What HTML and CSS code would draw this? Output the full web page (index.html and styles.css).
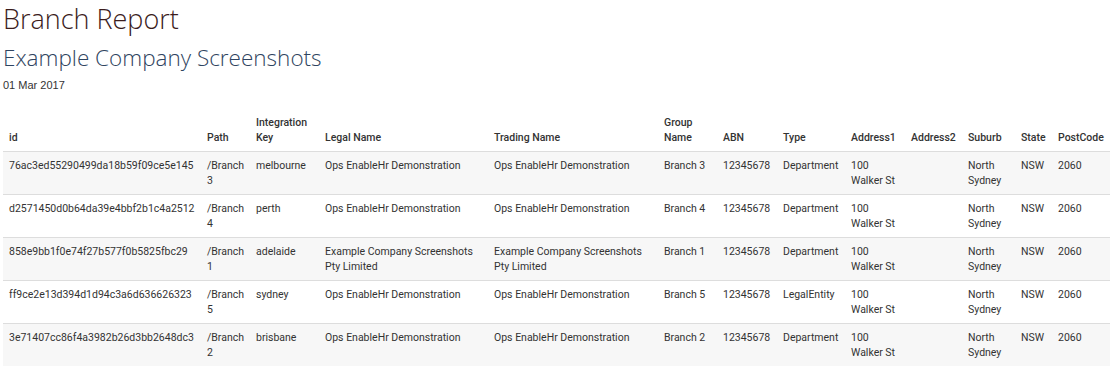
FILE: index.html
```html
<!DOCTYPE html>
<html>
<head>
<meta charset="utf-8">
<link rel="stylesheet" href="styles.css">
</head>
<body>
<div class="page">
  <h1 class="title">Branch Report</h1>
  <h2 class="subtitle">Example Company Screenshots</h2>
  <div class="date">01 Mar 2017</div>
  <table class="report">
    <colgroup>
      <col class="c-id"><col class="c-path"><col class="c-key"><col class="c-legal"><col class="c-trading"><col class="c-group"><col class="c-abn"><col class="c-type"><col class="c-a1"><col class="c-a2"><col class="c-suburb"><col class="c-state"><col class="c-post">
    </colgroup>
    <thead>
      <tr>
        <th>id</th><th>Path</th><th>Integration Key</th><th>Legal Name</th><th>Trading Name</th><th>Group Name</th><th>ABN</th><th>Type</th><th>Address1</th><th>Address2</th><th>Suburb</th><th>State</th><th>PostCode</th>
      </tr>
    </thead>
    <tbody>
      <tr>
        <td>76ac3ed55290499da18b59f09ce5e145</td><td>/Branch 3</td><td>melbourne</td><td>Ops EnableHr Demonstration</td><td>Ops EnableHr Demonstration</td><td>Branch 3</td><td>12345678</td><td>Department</td><td>100 Walker St</td><td></td><td>North Sydney</td><td>NSW</td><td>2060</td>
      </tr>
      <tr>
        <td>d2571450d0b64da39e4bbf2b1c4a2512</td><td>/Branch 4</td><td>perth</td><td>Ops EnableHr Demonstration</td><td>Ops EnableHr Demonstration</td><td>Branch 4</td><td>12345678</td><td>Department</td><td>100 Walker St</td><td></td><td>North Sydney</td><td>NSW</td><td>2060</td>
      </tr>
      <tr>
        <td>858e9bb1f0e74f27b577f0b5825fbc29</td><td>/Branch 1</td><td>adelaide</td><td>Example Company Screenshots Pty Limited</td><td>Example Company Screenshots Pty Limited</td><td>Branch 1</td><td>12345678</td><td>Department</td><td>100 Walker St</td><td></td><td>North Sydney</td><td>NSW</td><td>2060</td>
      </tr>
      <tr>
        <td>ff9ce2e13d394d1d94c3a6d636626323</td><td>/Branch 5</td><td>sydney</td><td>Ops EnableHr Demonstration</td><td>Ops EnableHr Demonstration</td><td>Branch 5</td><td>12345678</td><td>LegalEntity</td><td>100 Walker St</td><td></td><td>North Sydney</td><td>NSW</td><td>2060</td>
      </tr>
      <tr>
        <td>3e71407cc86f4a3982b26d3bb2648dc3</td><td>/Branch 2</td><td>brisbane</td><td>Ops EnableHr Demonstration</td><td>Ops EnableHr Demonstration</td><td>Branch 2</td><td>12345678</td><td>Department</td><td>100 Walker St</td><td></td><td>North Sydney</td><td>NSW</td><td>2060</td>
      </tr>
    </tbody>
  </table>
</div>
</body>
</html>
```
FILE: styles.css
```css
html, body {
  margin: 0;
  padding: 0;
  background: #fff;
}
.page {
  padding: 0 4px 0 3px;
  font-family: Roboto, "Liberation Sans", sans-serif;
  color: #333;
}
.title {
  margin: 0;
  padding-top: 2px;
  font-family: "Open Sans", sans-serif;
  font-weight: 300;
  font-size: 27px;
  line-height: 34px;
  color: #3b1c1c;
}
.subtitle {
  margin: 7px 0 0;
  font-family: "Open Sans", sans-serif;
  font-weight: 300;
  font-size: 22.5px;
  line-height: 30px;
  color: #2f4460;
}
.date {
  margin-top: 5px;
  font-family: "Liberation Sans", Arial, sans-serif;
  font-size: 11px;
  line-height: 14px;
  color: #333;
}
.report {
  margin-top: 17px;
  width: 100%;
  border-collapse: collapse;
  table-layout: fixed;
  font-size: 10.5px;
  line-height: 15px;
}
.report th, .report td {
  padding: 6px 6px 6px 6px;
  text-align: left;
}
.report th {
  vertical-align: bottom;
  font-weight: 500;
  border-bottom: 1px solid #ddd;
}
.report td {
  vertical-align: top;
  border-top: 1px solid #ddd;
}
.report tbody tr:first-child td {
  border-top: none;
}
.report tbody tr:nth-child(odd) {
  background: #f7f7f7;
}
.c-id { width: 198px; }
.c-path { width: 49px; }
.c-key { width: 69px; }
.c-legal { width: 169px; }
.c-trading { width: 170px; }
.c-group { width: 59px; }
.c-abn { width: 60px; }
.c-type { width: 68px; }
.c-a1 { width: 60px; }
.c-a2 { width: 57px; }
.c-suburb { width: 53px; }
.c-state { width: 37px; }
.c-post { width: 58px; }
```
